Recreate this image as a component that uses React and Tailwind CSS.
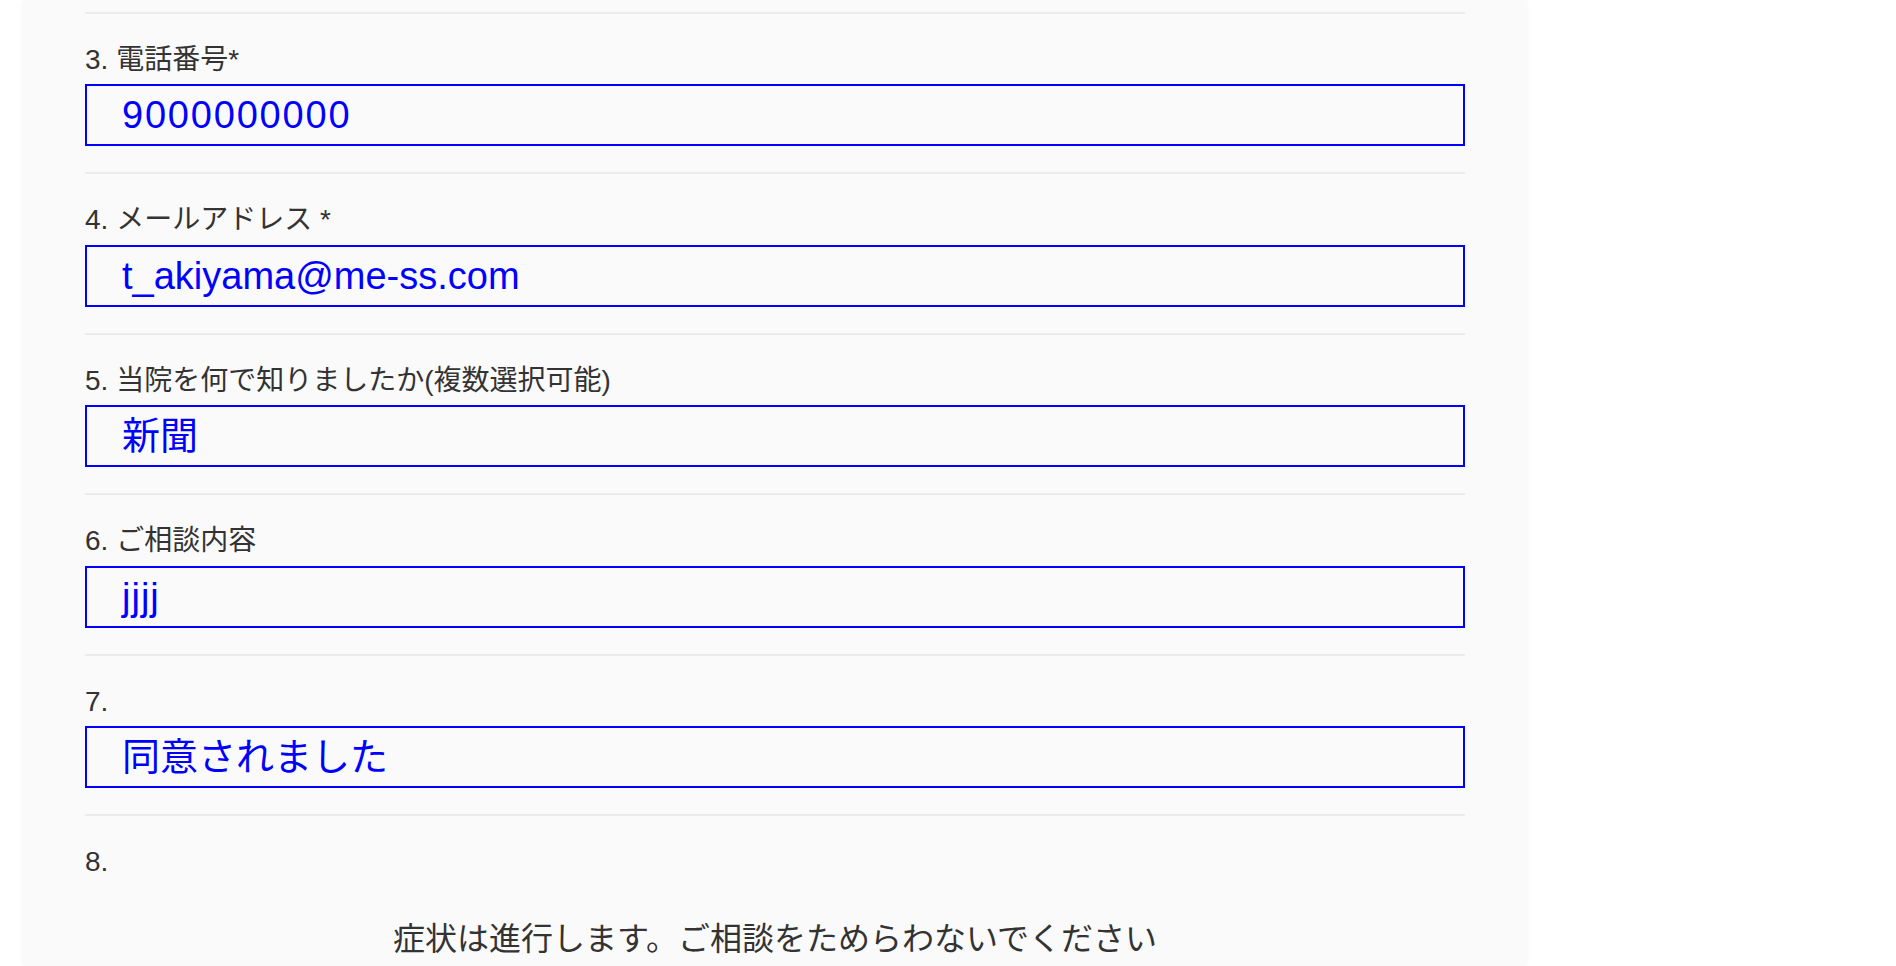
const rows = [
  { label: "3. 電話番号*", value: "9000000000", tracking: "tracking-[1.8px]" },
  { label: "4. メールアドレス *", value: "t_akiyama@me-ss.com", tracking: "" },
  { label: "5. 当院を何で知りましたか(複数選択可能)", value: "新聞", tracking: "" },
  { label: "6. ご相談内容", value: "jjjj", tracking: "tracking-[1px]" },
  { label: "7.", value: "同意されました", tracking: "" },
];

const font = { fontFamily: '"Liberation Sans", "Noto Sans CJK JP", sans-serif' };

const AnswerRow = ({ label, value, tracking }) => (
  <div className="border-t-2 border-[#ebebeb] pt-[26px] pb-[26px]">
    <p className="text-[28px] leading-[40px] text-[#333]">{label}</p>
    <div className="mt-[4.5px] h-[62px] border-2 border-[#0000ff] pl-[35px] flex items-center">
      <span className={`text-[38px] leading-[58px] text-[#0000ff] whitespace-nowrap ${tracking}`}>{value}</span>
    </div>
  </div>
);

export default function App() {
  return (
    <div className="h-[966px] overflow-hidden bg-white" style={font}>
      <div className="ml-[24px] w-[1502px] min-h-[966px] bg-[#fafafa] shadow-[0_0_6px_rgba(0,0,0,0.06)] px-[61px] pt-[11.5px]">
        {rows.map((row) => (
          <AnswerRow key={row.label} {...row} />
        ))}
        <div className="border-t-2 border-[#ebebeb] pt-[26px]">
          <p className="text-[28px] leading-[40px] text-[#333]">8.</p>
          <p className="mt-[32.5px] text-center text-[32px] leading-[48px] text-[#333]">
            症状は進行します。ご相談をためらわないでください
          </p>
        </div>
      </div>
    </div>
  );
}
